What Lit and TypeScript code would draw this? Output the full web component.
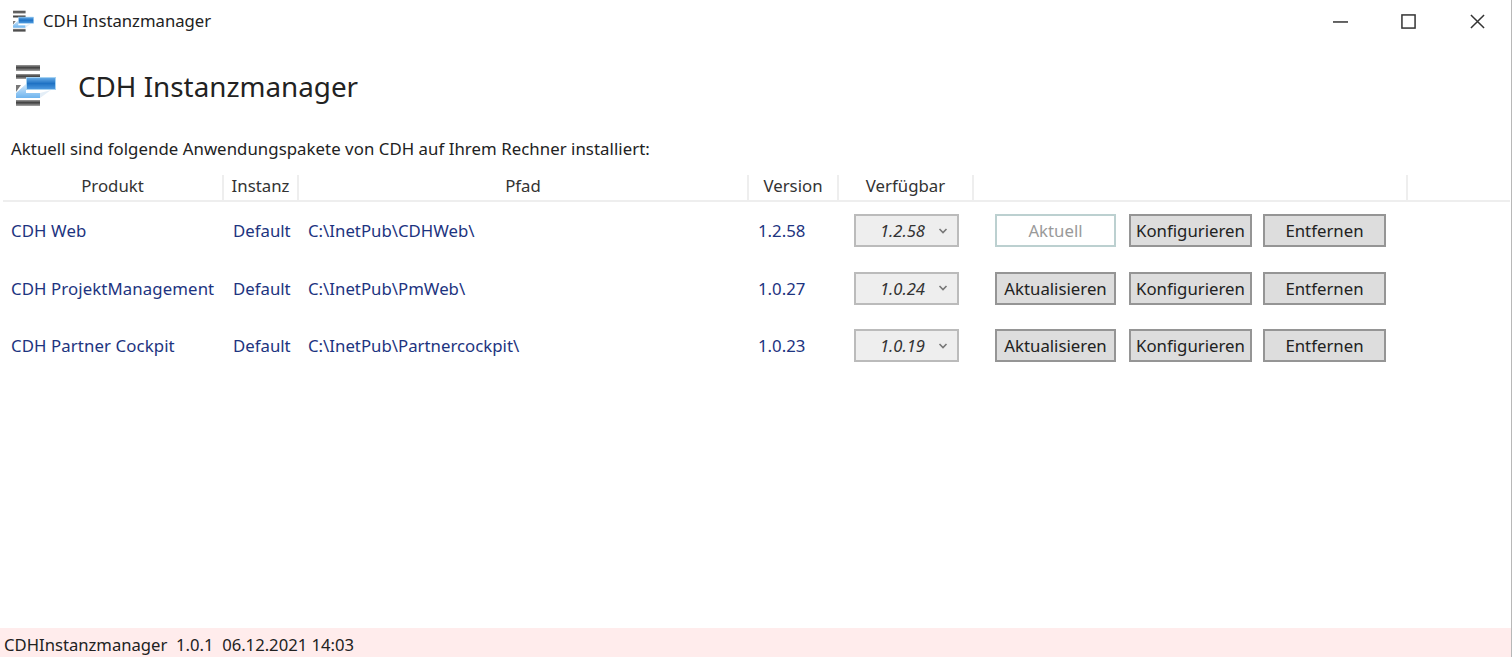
import { LitElement, html, css, svg } from "lit";
import { customElement } from "lit/decorators.js";

const barGrad = svg`<defs>
  <linearGradient id="bar" x1="0" y1="0" x2="0" y2="1"><stop offset="0" stop-color="#9a9a9a"/><stop offset=".45" stop-color="#3f3f3f"/><stop offset="1" stop-color="#a8a8a8"/></linearGradient>
  <linearGradient id="blue" x1="0" y1="0" x2="0" y2="1"><stop offset="0" stop-color="#6aaee8"/><stop offset=".5" stop-color="#1f72c4"/><stop offset="1" stop-color="#4f9be0"/></linearGradient>
  <linearGradient id="pale" x1="0" y1="0" x2="0" y2="1"><stop offset="0" stop-color="#d3e9fb"/><stop offset="1" stop-color="#6eb4ee"/></linearGradient>
</defs>`;

function logo(cls: string) {
  return html`<svg class=${cls} viewBox="0 0 44 44" aria-hidden="true">
    ${barGrad}
    <rect x="2" y="1" width="24" height="6" fill="url(#bar)"/>
    <rect x="2" y="10" width="24" height="5" fill="url(#bar)"/>
    <rect x="2" y="36" width="24" height="6" fill="url(#bar)"/>
    <path d="M2 21 L7 21 L2 28 Z" fill="#777"/>
    <path d="M2 29 L12 20 L12 29 L26 29 L26 34 L2 34 Z" fill="url(#pale)"/>
    <path d="M26 29 L37 26 L26 34 Z" fill="#e4eef7"/>
    <rect x="12.5" y="13.5" width="29" height="12" fill="url(#blue)" stroke="#a5d2f2"/>
  </svg>`;
}

const rows = [
  { name: "CDH Web", path: "C:\\InetPub\\CDHWeb\\", version: "1.2.58", avail: "1.2.58", current: true },
  { name: "CDH ProjektManagement", path: "C:\\InetPub\\PmWeb\\", version: "1.0.27", avail: "1.0.24", current: false },
  { name: "CDH Partner Cockpit", path: "C:\\InetPub\\Partnercockpit\\", version: "1.0.23", avail: "1.0.19", current: false },
];

@customElement("app-root")
export class AppRoot extends LitElement {
  static styles = css`
    :host {
      display: flex;
      flex-direction: column;
      height: 100vh;
      overflow: hidden;
      background: #fff;
      color: #222;
      font-family: "Noto Sans", "Open Sans", sans-serif;
      font-size: 16.8px;
      box-sizing: border-box;
      border-right: 1px solid #b8b8b8;
    }
    * { box-sizing: border-box; }
    .titlebar {
      height: 42px;
      display: flex;
      align-items: center;
      padding-left: 12px;
      flex: none;
    }
    .small-logo { width: 23px; height: 23px; margin-right: 8px; filter: blur(0.4px); }
    .big-logo { width: 44px; height: 44px; filter: blur(0.5px); }
    .window-title { flex: 1; color: #222; padding-bottom: 2px; font-size: 16.7px; }
    .wbtn { width: 68px; height: 42px; display: flex; align-items: center; justify-content: center; }
    .wbtn.shift { padding-right: 1px; }
    .wbtn svg { width: 15px; height: 15px; stroke: #333; stroke-width: 1.6; fill: none; }
    .heading {
      display: flex;
      align-items: center;
      gap: 20px;
      padding-left: 14px;
      margin-top: 21px;
      height: 46px;
      flex: none;
      font-size: 27.8px;
      color: #222;
    }
    .intro { padding: 28px 0 0 11px; height: 66px; flex: none; line-height: 24px; letter-spacing: 0.05px; }
    .table { flex: 1; padding-left: 3px; padding-right: 1px; }
    .head, .row {
      display: grid;
      grid-template-columns: 221px 75px 450px 90px 135px 434px 1fr;
      align-items: center;
    }
    .head { height: 27px; border-bottom: 2px solid #eee; color: #333; }
    .head > div {
      height: 25px; line-height: 22px; text-align: center;
      border-right: 2px solid #eee;
    }
    .head > div:last-child { border-right: 0; }
    .row { height: 57.5px; color: #1d3480; margin-left: -1px; }
    .c1 { padding-left: 9px; white-space: nowrap; letter-spacing: 0.1px; }
    .c2 { padding-left: 10px; }
    .c3 { padding-left: 10px; white-space: nowrap; }
    .c4 { padding-left: 10px; }
    .combo {
      width: 105px; height: 33px; margin-left: 16px;
      display: flex; align-items: center; justify-content: flex-end;
      background: #eee; border: 2px solid #bbb; color: #333;
      font-style: italic; font-size: 16.6px; padding-right: 9px; gap: 13px;
    }
    .combo svg { width: 10px; height: 8px; stroke: #777; stroke-width: 1.6; fill: none; }
    .actions { grid-column: span 2; display: flex; padding-left: 22px; gap: 13px; }
    .btn {
      width: 121px; height: 33px; display: flex; align-items: center; justify-content: center;
      background: #ddd; border: 2px solid #959595; color: #222;
      font: inherit; padding: 0;
    }
    .btn.k { width: 123px; margin-right: -2px; }
    .btn.e { width: 123px; }
    .btn.disabled { background: #fff; border-color: #bcd0d0; color: #9a9a9a; }
    .status {
      height: 29px; flex: none; background: #ffecec; color: #222; font-size: 16.65px;
      padding: 3px 0 0 4px; display: flex; align-items: center; white-space: pre;
    }
  `;

  render() {
    return html`
      <div class="titlebar">
        ${logo("small-logo")}
        <div class="window-title">CDH Instanzmanager</div>
        <div class="wbtn shift"><svg viewBox="0 0 16 16"><path d="M0 8.5H16"/></svg></div>
        <div class="wbtn shift"><svg viewBox="0 0 16 16"><rect x="1" y="1" width="14" height="14"/></svg></div>
        <div class="wbtn"><svg viewBox="0 0 16 16"><path d="M1 1L15 15M15 1L1 15"/></svg></div>
      </div>
      <div class="heading">${logo("big-logo")}<span>CDH Instanzmanager</span></div>
      <div class="intro">Aktuell sind folgende Anwendungspakete von CDH auf Ihrem Rechner installiert:</div>
      <div class="table">
        <div class="head">
          <div>Produkt</div><div>Instanz</div><div>Pfad</div><div>Version</div><div>Verfügbar</div><div></div><div></div>
        </div>
        ${rows.map(r => html`
          <div class="row">
            <div class="c1">${r.name}</div>
            <div class="c2">Default</div>
            <div class="c3">${r.path}</div>
            <div class="c4">${r.version}</div>
            <div><div class="combo"><span>${r.avail}</span><svg viewBox="0 0 10 8"><path d="M1.5 2L5 5.5L8.5 2"/></svg></div></div>
            <div class="actions">
              <button class="btn ${r.current ? "disabled" : ""}">${r.current ? "Aktuell" : "Aktualisieren"}</button>
              <button class="btn k">Konfigurieren</button>
              <button class="btn e">Entfernen</button>
            </div>
          </div>`)}
      </div>
      <div class="status">CDHInstanzmanager  1.0.1  06.12.2021 14:03</div>
    `;
  }
}
